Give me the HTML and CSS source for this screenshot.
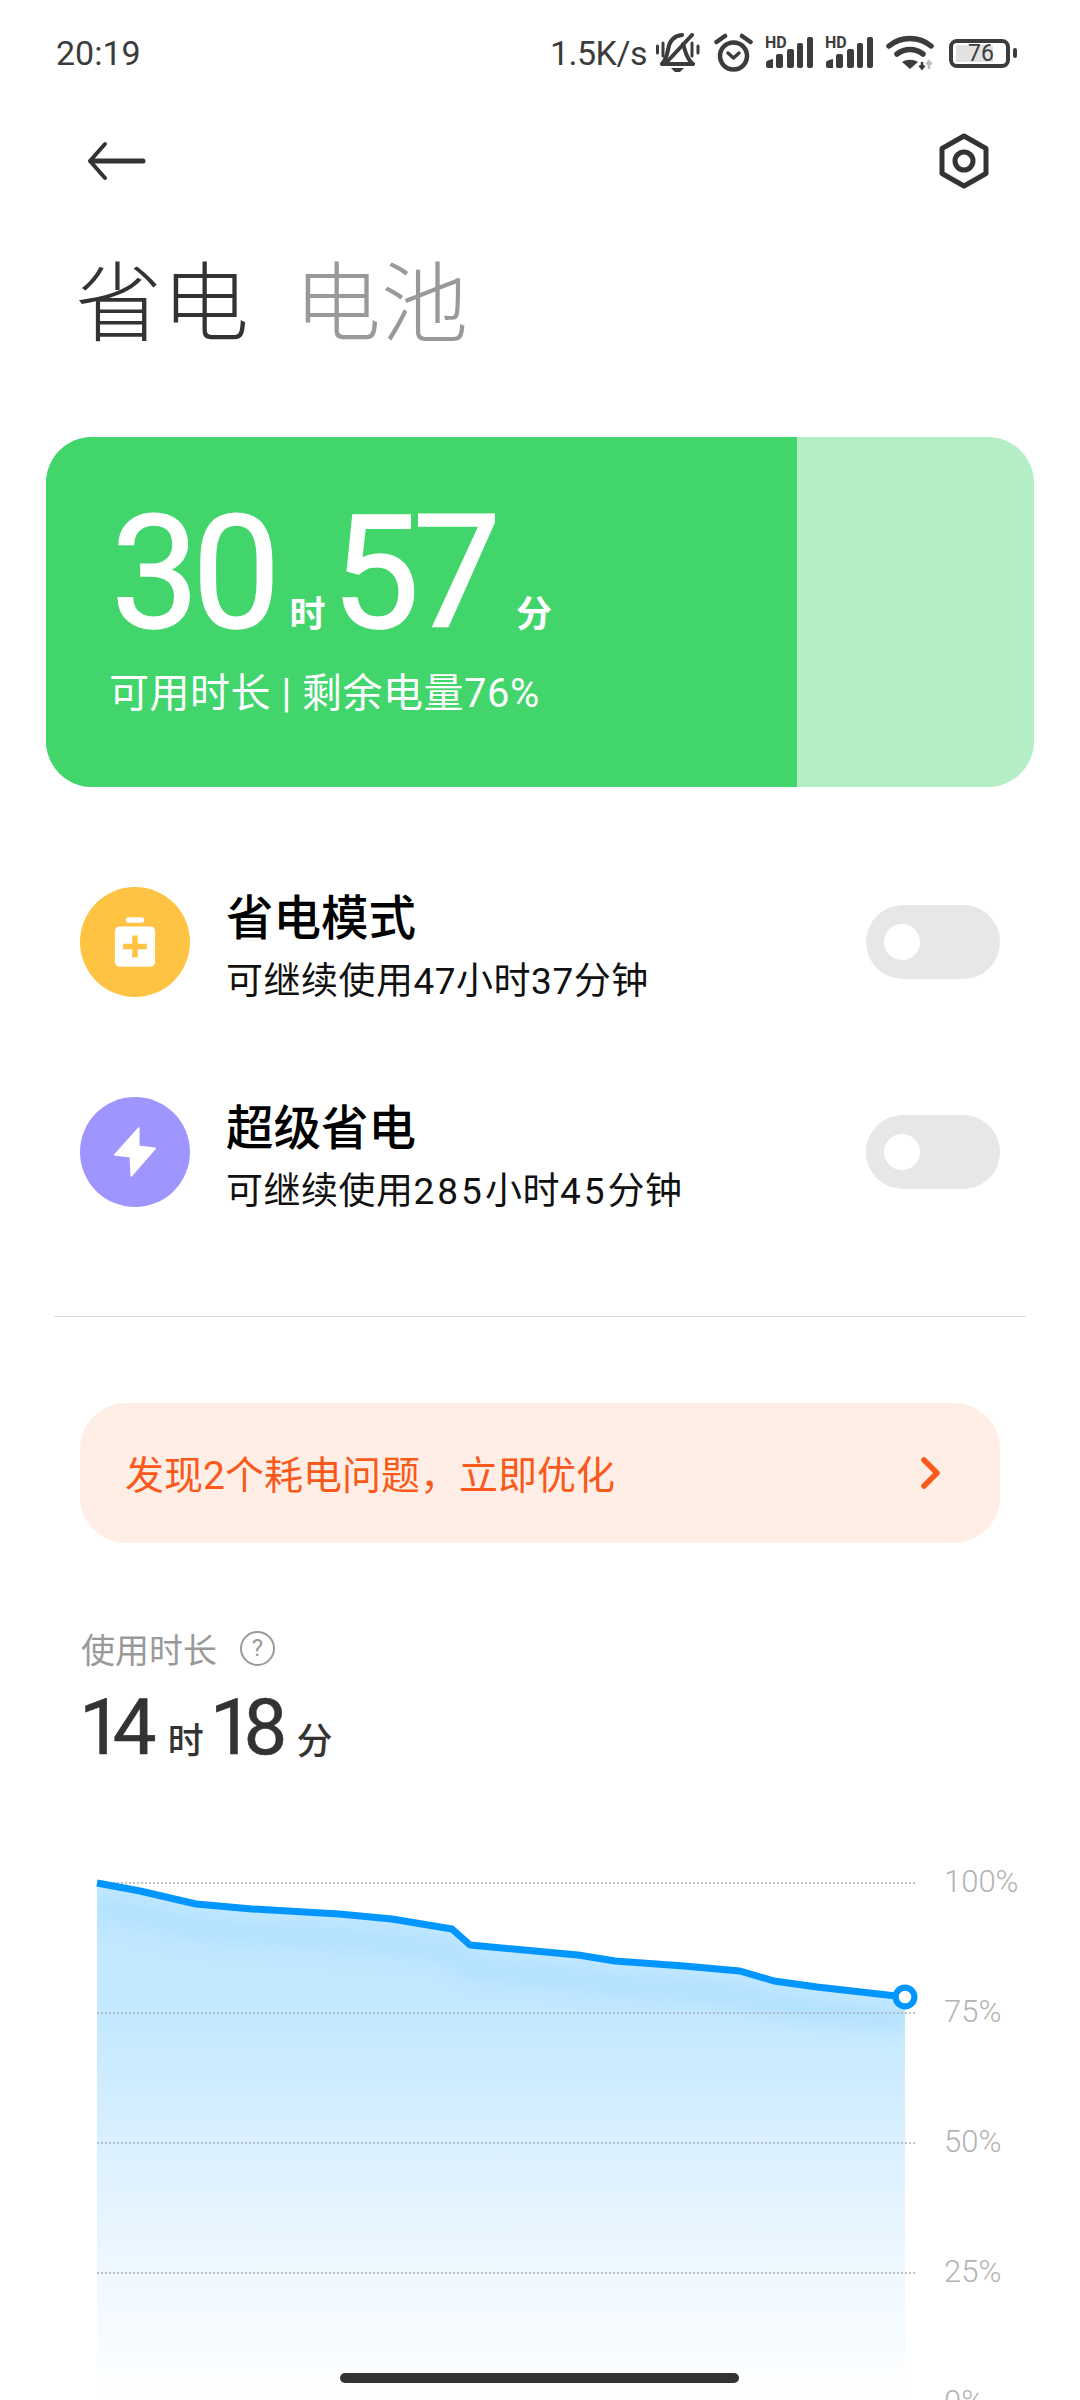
FILE: index.html
```html
<!DOCTYPE html>
<html lang="zh-CN">
<head>
    <meta charset="UTF-8">
    <meta name="viewport" content="width=device-width, initial-scale=1.0">
    <title>省电与电池</title>
    <link rel="stylesheet" href="styles.css">
</head>
<body>
    <div class="screen">
        <div class="status-bar">
            <span class="clock">20:19</span>
            <div class="status-right">
                <span class="speed">1.5K/s</span>
                <svg class="ico-bell" width="46" height="40" viewBox="0 0 46 40" fill="none" stroke="#3c3c3c" stroke-width="4" stroke-linecap="round">
                    <path d="M7 31H38M7 31C11 27 12 22 13 17 14 9 18 3 27 2M28 11C30 16 31 26 38 31"/>
                    <path d="M10 31L37 2"/>
                    <path d="M2.500 13v7M8 10v13M37 10v13M43 13v7" stroke-width="3"/>
                    <path d="M16 35h13l-4 4h-5z" fill="#3c3c3c" stroke="none"/>
                </svg>
                <svg class="ico-alarm" width="40" height="40" viewBox="0 0 40 40" fill="none" stroke="#3c3c3c" stroke-width="4.500" stroke-linecap="round" stroke-linejoin="round">
                    <circle cx="19.500" cy="23" r="13.500"/>
                    <path d="M14 20l5.500 5 5.500-5" stroke-width="3.500"/>
                    <path d="M2.500 9L11 3M28 3l8.500 6"/>
                </svg>
                <div class="signal">
                    <span class="hd">HD</span>
                    <svg width="50" height="32" viewBox="0 0 50 32" fill="#3c3c3c">
                        <path d="M1 26c0-2 2-3 7-4v9H3c-1 0-2-1-2-2z"/>
                        <rect x="11" y="17" width="7" height="14" rx="2"/>
                        <rect x="22" y="12" width="7" height="19" rx="2"/>
                        <rect x="32" y="6" width="6" height="25" rx="2"/>
                        <rect x="42" y="0" width="6" height="31" rx="2"/>
                    </svg>
                </div>
                <div class="signal">
                    <span class="hd">HD</span>
                    <svg width="50" height="32" viewBox="0 0 50 32" fill="#3c3c3c">
                        <path d="M1 26c0-2 2-3 7-4v9H3c-1 0-2-1-2-2z"/>
                        <rect x="11" y="17" width="7" height="14" rx="2"/>
                        <rect x="22" y="12" width="7" height="19" rx="2"/>
                        <rect x="32" y="6" width="6" height="25" rx="2"/>
                        <rect x="42" y="0" width="6" height="31" rx="2"/>
                    </svg>
                </div>
                <svg class="ico-wifi" width="48" height="36" viewBox="0 0 48 36" fill="none" stroke="#3c3c3c" stroke-width="5.500" stroke-linecap="round">
                    <path d="M3 11C15 1 33 1 45 11"/>
                    <path d="M11 19C19 13 29 13 37 19"/>
                    <path d="M16 27c5-3 11-3 16 0l-8 7z" fill="#3c3c3c" stroke="none"/>
                    <path d="M36 27v6M33.500 30.500l2.500 3 2.500-3" stroke-width="2.500" stroke-linecap="butt"/>
                    <path d="M43 34v-7M40.500 29.500l2.500-3 2.500 3" stroke="#bbb" stroke-width="2.500" stroke-linecap="butt"/>
                </svg>
                <div class="battery">
                    <div class="battery-body">
                        <div class="battery-fill"></div>
                        <span class="battery-num">76</span>
                    </div>
                    <div class="battery-nub"></div>
                </div>
            </div>
        </div>

        <div class="toolbar">
            <svg width="60" height="40" viewBox="0 0 60 40" fill="none" stroke="#333" stroke-linecap="round" stroke-linejoin="round">
                <path d="M56 20H4" stroke-width="5"/>
                <path d="M18 3L3 20l15 17" stroke-width="4"/>
            </svg>
            <svg width="52" height="56" viewBox="0 0 52 56" fill="none" stroke="#333" stroke-width="5" stroke-linejoin="round">
                <path d="M26 3l22 12.500v25L26 53 4 40.500v-25z"/>
                <circle cx="26" cy="28" r="9"/>
            </svg>
        </div>

        <div class="tabs">
            <span class="tab tab-on">省电</span>
            <span class="tab">电池</span>
        </div>

        <div class="time-card">
            <div class="time-card-main">
                <div class="time-big"><span class="num">30</span><span class="unit unit-h">时</span><span class="num">57</span><span class="unit unit-m">分</span></div>
                <div class="time-note">可用时长 | 剩余电量76%</div>
            </div>
            <div class="time-card-rest"></div>
        </div>

        <div class="mode-row">
            <div class="mode-icon yellow">
                <svg width="42" height="50" viewBox="0 0 46 54" fill="#fff">
                    <rect x="13" y="0" width="20" height="6" rx="3"/>
                    <path fill-rule="evenodd" d="M6 10h34a5 5 0 0 1 5 5v34a5 5 0 0 1-5 5H6a5 5 0 0 1-5-5V15a5 5 0 0 1 5-5zM20 20v9h-10v6h10v9h6v-9h10v-6H26v-9z"/>
                </svg>
            </div>
            <div class="mode-text">
                <div class="mode-title">省电模式</div>
                <div class="mode-sub">可继续使用47小时37分钟</div>
            </div>
            <div class="switch"><div class="knob"></div></div>
        </div>

        <div class="mode-row">
            <div class="mode-icon purple">
                <svg width="42" height="50" viewBox="0 0 46 54" fill="#fff" stroke="#fff" stroke-width="2" stroke-linejoin="round">
                    <path d="M27 1L1 30l17 2 1 21 26-30-18-2z"/>
                </svg>
            </div>
            <div class="mode-text">
                <div class="mode-title">超级省电</div>
                <div class="mode-sub">可继续使用<span class="sub-num">285</span>小时<span class="sub-num">45</span>分钟</div>
            </div>
            <div class="switch"><div class="knob"></div></div>
        </div>

        <div class="divider"></div>

        <div class="tip">
            <span class="tip-text">发现2个耗电问题，立即优化</span>
            <svg width="22" height="32" viewBox="0 0 22 32" fill="none" stroke="#f9591a" stroke-width="5.500" stroke-linecap="round" stroke-linejoin="round">
                <path d="M4 3l13 13L4 29"/>
            </svg>
        </div>

        <div class="usage-label">
            <span>使用时长</span>
            <span class="help">?</span>
        </div>
        <div class="usage-time"><span class="num">14</span><span class="unit">时</span><span class="num">18</span><span class="unit unit-last">分</span></div>

        <svg class="chart" width="1080" height="560" viewBox="0 1840 1080 560">
            <defs>
                <linearGradient id="fade" x1="0" y1="1883" x2="0" y2="2403" gradientUnits="userSpaceOnUse">
                    <stop offset="0" stop-color="#c0e8ff"/>
                    <stop offset="0.25" stop-color="#c3e8ff"/>
                    <stop offset="0.5" stop-color="#daf0ff"/>
                    <stop offset="0.75" stop-color="#eff8ff"/>
                    <stop offset="1" stop-color="#ffffff"/>
                </linearGradient>
                <filter id="soft" x="-5%" y="-50%" width="110%" height="200%">
                    <feGaussianBlur stdDeviation="9"/>
                </filter>
                <clipPath id="under">
                    <path d="M97 1883L140 1891 196 1904 252 1909 339 1914 392 1919 452 1929 470 1945 578 1955 615 1961 684 1966 740 1971 774 1981 817 1987 905 1997V2403H97z"/>
                </clipPath>
            </defs>
            <path fill="url(#fade)" d="M97 1883L140 1891 196 1904 252 1909 339 1914 392 1919 452 1929 470 1945 578 1955 615 1961 684 1966 740 1971 774 1981 817 1987 905 1997V2403H97z"/>
            <g clip-path="url(#under)">
                <path class="glow" filter="url(#soft)" d="M97 1907L140 1915 196 1928 252 1933 339 1938 392 1943 452 1953 470 1969 578 1979 615 1985 684 1990 740 1995 774 2005 817 2011 905 2021"/>
            </g>
            <g class="grid">
                <line x1="97" y1="1883" x2="915" y2="1883"/>
                <line x1="97" y1="2013" x2="915" y2="2013"/>
                <line x1="97" y1="2143" x2="915" y2="2143"/>
                <line x1="97" y1="2273" x2="915" y2="2273"/>
            </g>
            <path class="trend" d="M97 1883L140 1891 196 1904 252 1909 339 1914 392 1919 452 1929 470 1945 578 1955 615 1961 684 1966 740 1971 774 1981 817 1987 905 1997"/>
            <circle class="trend-end" cx="905" cy="1997" r="9.400"/>
            <g class="axis">
                <text x="944" y="1892">100%</text>
                <text x="944" y="2022">75%</text>
                <text x="944" y="2152">50%</text>
                <text x="944" y="2282">25%</text>
                <text x="944" y="2412">0%</text>
            </g>
        </svg>

        <div class="home-bar"></div>
    </div>
</body>
</html>
```

FILE: styles.css
```css
html, body {
    margin: 0;
    padding: 0;
    background: #fff;
}

.screen {
    position: relative;
    width: 1080px;
    height: 2400px;
    overflow: hidden;
    font-family: 'Roboto', 'Noto Sans CJK SC', sans-serif;
    color: #333;
}

/* status bar */
.status-bar {
    display: flex;
    justify-content: space-between;
    align-items: center;
    height: 106px;
    padding: 0 63px 0 56px;
    box-sizing: border-box;
    color: #3c3c3c;
}

.clock, .speed {
    font-size: 34px;
    line-height: 40px;
}

.status-right {
    display: flex;
    align-items: center;
}

.speed {
    margin-right: 8px;
    letter-spacing: -0.5px;
}

.ico-alarm { margin-left: 13px; }

.signal {
    position: relative;
    width: 50px;
    height: 32px;
    margin-left: 10px;
}

.ico-alarm + .signal { margin-left: 11px; }

.hd {
    position: absolute;
    left: 0;
    top: -2px;
    font-size: 16px;
    line-height: 16px;
    font-weight: 700;
    color: #3c3c3c;
}

.signal svg { display: block; }

.ico-wifi { margin-left: 11px; }

.battery {
    display: flex;
    align-items: center;
    margin-left: 15px;
}

.battery-body {
    position: relative;
    display: flex;
    align-items: center;
    width: 61px;
    height: 29px;
    box-sizing: border-box;
    padding-left: 3px;
    border: 4px solid #3c3c3c;
    border-radius: 8px;
}

.battery-fill {
    width: 37px;
    height: 17px;
    background: #e2e2e2;
}

.battery-num {
    position: absolute;
    left: 15px;
    top: -3px;
    font-size: 23px;
    line-height: 27px;
    color: #3c3c3c;
}

.battery-nub {
    width: 4px;
    height: 10px;
    margin-left: 3px;
    border-radius: 2px;
    background: #3c3c3c;
}

/* toolbar and tabs */
.toolbar {
    display: flex;
    justify-content: space-between;
    align-items: center;
    height: 110px;
    padding: 0 90px 0 87px;
}

.tabs {
    display: flex;
    gap: 45px;
    padding: 39px 0 0 75px;
}

.tab {
    font-size: 87px;
    line-height: 100px;
    font-weight: 200;
    color: #999;
}

.tab-on { color: #333; }

/* green card */
.time-card {
    display: flex;
    height: 350px;
    margin: 82px 46px 0;
    border-radius: 46px;
    overflow: hidden;
    background: #b4eec5;
}

.time-card-main {
    width: 751px;
    box-sizing: border-box;
    padding: 63px 0 0 65px;
    background: #41d56c;
    color: #fff;
}

.time-big {
    display: flex;
    align-items: baseline;
    height: 146px;
}

.num {
    font-size: 157px;
    line-height: 146px;
    letter-spacing: -7px;
    -webkit-text-stroke: 1.5px #fff;
}

.unit {
    font-size: 36px;
    line-height: 40px;
    font-weight: 700;
}

.unit-h { margin: 0 6px 0 16px; }
.unit-m { margin-left: 22px; }

.time-note {
    margin: 23px 0 0 -2px;
    font-size: 40px;
    line-height: 50px;
    letter-spacing: 0.5px;
}

/* mode rows */
.mode-row {
    display: flex;
    align-items: center;
    height: 110px;
    margin: 100px 80px 0;
}

.mode-icon {
    display: flex;
    justify-content: center;
    align-items: center;
    flex: none;
    width: 110px;
    height: 110px;
    border-radius: 50%;
}

.yellow { background: #ffc344; }
.purple { background: #9f95fe; }

.mode-text {
    flex: 1;
    margin-left: 36px;
    padding-top: 10px;
}

.mode-title {
    font-size: 47.5px;
    line-height: 60px;
    font-weight: 500;
    color: #000;
}

.mode-sub {
    margin-top: 10px;
    font-size: 37px;
    line-height: 46px;
    letter-spacing: 0.5px;
    color: #111;
}

.sub-num { letter-spacing: 3px; }

.switch {
    display: flex;
    align-items: center;
    flex: none;
    width: 134px;
    height: 74px;
    box-sizing: border-box;
    padding-left: 18px;
    border-radius: 37px;
    background: #e7e7e7;
}

.knob {
    width: 36px;
    height: 36px;
    border-radius: 50%;
    background: #fff;
}

.divider {
    height: 1px;
    margin: 109px 54px 0;
    background: #dcdcdc;
}

/* tip banner */
.tip {
    display: flex;
    justify-content: space-between;
    align-items: center;
    height: 140px;
    margin: 86px 80px 0;
    padding: 0 58px 0 45px;
    border-radius: 46px;
    background: #ffeee6;
    color: #f9591a;
    font-size: 39px;
}

.tip-text { padding-bottom: 3px; }

/* usage */
.usage-label {
    display: flex;
    align-items: center;
    gap: 23px;
    height: 40px;
    margin: 85px 0 0 81px;
    font-size: 34px;
    color: #999;
}

.help {
    width: 35px;
    height: 35px;
    box-sizing: border-box;
    border: 2.5px solid #999;
    border-radius: 50%;
    text-align: center;
    font-size: 24px;
    line-height: 30px;
}

.usage-time {
    display: flex;
    align-items: baseline;
    height: 90px;
    margin: 15px 0 0 79px;
    color: #333;
}

.usage-time .num {
    font-size: 78px;
    line-height: 90px;
    letter-spacing: -10px;
    -webkit-text-stroke: 0.5px #333;
}

.usage-time .unit {
    margin: 0 6px 0 21px;
    font-size: 36px;
    font-weight: 500;
}

.usage-time .unit-last { margin-left: 19px; }

/* chart */
.chart {
    position: absolute;
    left: 0;
    top: 1840px;
}

.glow {
    fill: none;
    stroke: #a4dcff;
    stroke-width: 22;
    opacity: 0.55;
}

.grid line {
    stroke: #a8b0b6;
    stroke-width: 1.500;
    stroke-dasharray: 2 2;
}

.trend {
    fill: none;
    stroke: #0096ff;
    stroke-width: 7;
    stroke-linejoin: round;
}

.trend-end {
    fill: #fff;
    stroke: #0096ff;
    stroke-width: 6.200;
}

.axis text {
    font-family: 'Roboto', sans-serif;
    font-size: 31px;
    font-weight: 300;
    fill: #b3b3b3;
}

.home-bar {
    position: absolute;
    left: 340px;
    top: 2373px;
    width: 399px;
    height: 10px;
    border-radius: 5px;
    background: #333;
}
```
